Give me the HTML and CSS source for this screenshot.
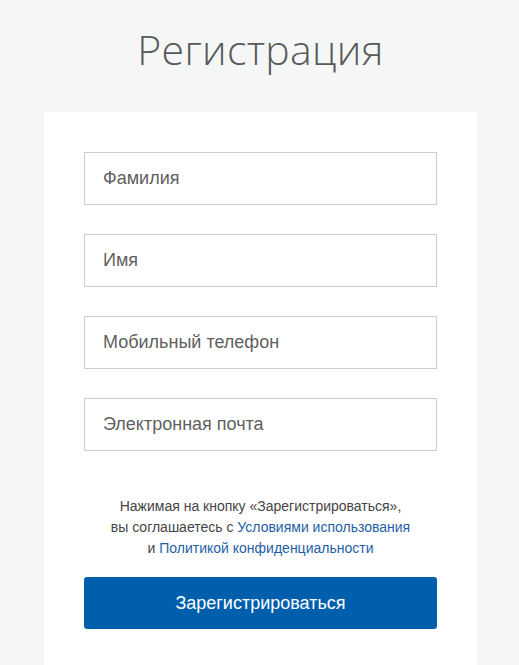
FILE: index.html
```html
<!DOCTYPE html>
<html lang="ru">
<head>
<meta charset="utf-8">
<link rel="stylesheet" href="styles.css">
</head>
<body>
<div class="page">
  <h1 class="title">Регистрация</h1>
  <div class="card">
    <div class="field">Фамилия</div>
    <div class="field">Имя</div>
    <div class="field">Мобильный телефон</div>
    <div class="field">Электронная почта</div>
    <p class="terms">Нажимая на кнопку «Зарегистрироваться»,<br>вы соглашаетесь с <a href="#">Условиями использования</a><br>и <a href="#">Политикой конфиденциальности</a></p>
    <button class="btn">Зарегистрироваться</button>
  </div>
</div>
</body>
</html>
```

FILE: styles.css
```css
html, body {
  margin: 0;
  padding: 0;
  background: #f5f7f6;
  height: 100%;
}
.page {
  display: flex;
  flex-direction: column;
  align-items: center;
  min-height: 100%;
  padding-left: 2px;
  box-sizing: border-box;
}
.title {
  margin: 0;
  padding-top: 24px;
  height: 112px;
  box-sizing: border-box;
  font-family: "Open Sans", sans-serif;
  font-weight: 300;
  font-size: 41px;
  line-height: 50px;
  color: #5a5a5a;
  letter-spacing: 0.3px;
}
.card {
  width: 433px;
  box-sizing: border-box;
  background: #fff;
  padding: 40px 40px 36px;
  flex: 1;
  display: flex;
  flex-direction: column;
  gap: 29px;
}
.field {
  height: 53px;
  box-sizing: border-box;
  border: 1px solid #cccccc;
  padding: 0 18px;
  display: flex;
  align-items: center;
  font-family: "Liberation Sans", Arial, sans-serif;
  font-size: 18px;
  color: #5f5f5f;
}
.terms {
  margin: 16px 0 0;
  text-align: center;
  font-family: "Liberation Sans", Arial, sans-serif;
  font-size: 14px;
  line-height: 21px;
  color: #444;
}
.terms a {
  color: #1f5ea6;
  text-decoration: none;
}
.btn {
  margin-top: -11px;
  height: 52px;
  border: none;
  border-radius: 3px;
  background: #005fad;
  color: #fff;
  font-family: "Liberation Sans", Arial, sans-serif;
  font-size: 18px;
  padding: 0;
}
```
